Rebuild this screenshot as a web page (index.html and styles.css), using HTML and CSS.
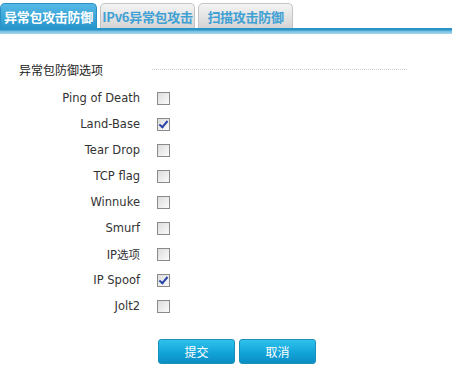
FILE: index.html
```html
<!DOCTYPE html>
<html lang="zh-CN">
<head>
  <meta charset="UTF-8">
  <title>异常包攻击防御</title>
  <link rel="stylesheet" href="styles.css">
</head>
<body>
  <div class="tabs">
    <a class="tab active">异常包攻击防御</a>
    <a class="tab">IPv6异常包攻击</a>
    <a class="tab">扫描攻击防御</a>
  </div>
  <div class="tab-bar"></div>

  <div class="panel">
    <div class="section-title">
      <span>异常包防御选项</span>
      <i class="dots"></i>
    </div>
    <div class="rows">
      <label class="row"><span class="name">Ping of Death</span><span class="box"></span></label>
      <label class="row"><span class="name">Land-Base</span><span class="box checked"></span></label>
      <label class="row"><span class="name">Tear Drop</span><span class="box"></span></label>
      <label class="row"><span class="name">TCP flag</span><span class="box"></span></label>
      <label class="row"><span class="name">Winnuke</span><span class="box"></span></label>
      <label class="row"><span class="name">Smurf</span><span class="box"></span></label>
      <label class="row"><span class="name">IP选项</span><span class="box"></span></label>
      <label class="row"><span class="name">IP Spoof</span><span class="box checked"></span></label>
      <label class="row"><span class="name">Jolt2</span><span class="box"></span></label>
    </div>
    <div class="actions">
      <button class="btn">提交</button>
      <button class="btn">取消</button>
    </div>
  </div>
</body>
</html>
```

FILE: styles.css
```css
html,body{
  margin: 0;
  padding: 0;
  background: #fff;
  font-family: "DejaVu Sans", "Noto Sans CJK SC", sans-serif;
  font-size: 11.5px;
  color: #333;
}
.tabs{
  display: flex;
  gap: 3px;
  padding-top: 3px;
  height: 25px;
}
.tab{
  width: 95px;
  height: 25px;
  line-height: 25px;
  text-align: center;
  font-family: "Noto Sans CJK SC", sans-serif;
  font-size: 13px;
  font-weight: bold;
  color: #3fa0d4;
  background: linear-gradient(#f4f4f4, #d4d4d4);
  border: 1px solid #c4c4c4;
  border-bottom: none;
  border-radius: 5px 5px 0 0;
  box-sizing: border-box;
  letter-spacing: -0.3px;
}
.tab.active{
  width: 97px;
  color: #fff;
  background: linear-gradient(#55b9e6, #2796cd);
  border-color: #2a8fc2;
}
.tab-bar{
  height: 6px;
  background: linear-gradient(#2a93c8 0, #2a93c8 2px, #70bde0 3px, #a9d8ee 6px);
}
.panel{
  padding: 27px 0 0 19px;
}
.section-title{
  display: flex;
  align-items: center;
  font-size: 12px;
  color: #222;
}
.section-title span{
  width: 133px;
}
.dots{
  width: 255px;
  border-top: 1px dotted #ccc;
}
.rows{
  margin-top: 7px;
}
.row{
  display: flex;
  align-items: center;
  height: 26px;
}
.name{
  width: 121px;
  text-align: right;
  color: #333;
}
.box{
  width: 11px;
  height: 11px;
  margin-left: 17px;
  border: 1px solid #8a8a8a;
  background: linear-gradient(135deg, #dcdcdc, #fbfbfb);
  position: relative;
}
.box.checked::after{
  content: "";
  position: absolute;
  left: 3px;
  top: 0px;
  width: 3px;
  height: 7px;
  border: solid #2b44a8;
  border-width: 0 2px 2px 0;
  transform: rotate(40deg);
}
.actions{
  display: flex;
  gap: 4px;
  margin: 20px 0 0 139px;
}
.btn{
  width: 77px;
  height: 25px;
  border: 1px solid #1a8fb8;
  border-radius: 3px;
  background: linear-gradient(#2fc2ec, #11a1d6 60%, #0b8ec4);
  color: #fff;
  font-family: "Noto Sans CJK SC", sans-serif;
  font-size: 12px;
  padding: 0;
}
```
